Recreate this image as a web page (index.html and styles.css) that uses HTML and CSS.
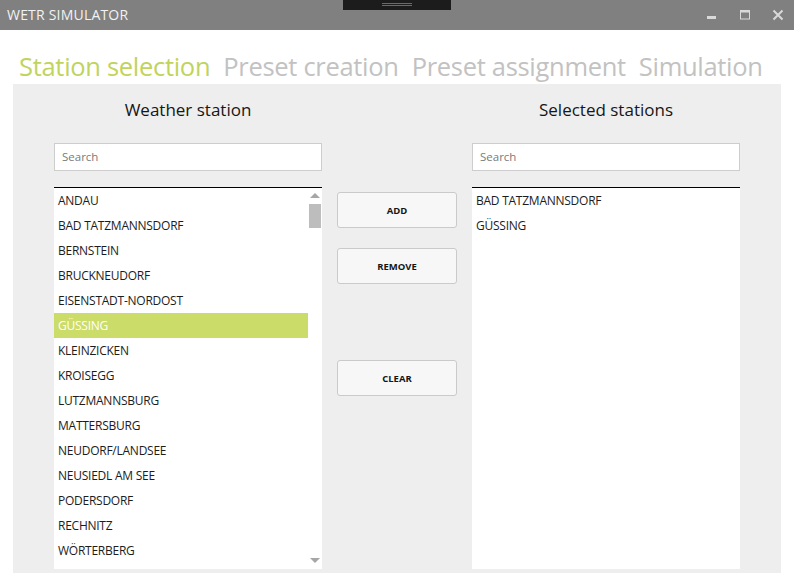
FILE: index.html
```html
<!DOCTYPE html>
<html>
<head>
<meta charset="utf-8">
<title>WETR SIMULATOR</title>
<link rel="stylesheet" href="styles.css">
</head>
<body>
<div class="window">
  <header class="titlebar">
    <div class="title">WETR SIMULATOR</div>
    <div class="handle"><span></span><span></span></div>
    <div class="controls">
      <div class="ctl"><svg width="12" height="12" viewBox="0 0 12 12"><rect x="1" y="7" width="9" height="3" fill="#d9d9d9"/></svg></div>
      <div class="ctl"><svg width="12" height="12" viewBox="0 0 12 12"><rect x="1.5" y="1.5" width="9" height="8.5" fill="none" stroke="#d9d9d9" stroke-width="1"/><rect x="1" y="1" width="10" height="2.5" fill="#d9d9d9"/></svg></div>
      <div class="ctl"><svg width="12" height="12" viewBox="0 0 12 12"><path d="M1.5 1.5 L10.5 10.5 M10.5 1.5 L1.5 10.5" stroke="#d9d9d9" stroke-width="2"/></svg></div>
    </div>
  </header>
  <nav class="tabs">
    <span class="tab active">Station selection</span>
    <span class="tab">Preset creation</span>
    <span class="tab">Preset assignment</span>
    <span class="tab">Simulation</span>
  </nav>
  <main class="panel">
    <section class="column">
      <h2 class="heading">Weather station</h2>
      <div class="search">Search</div>
      <div class="list">
        <ul class="items">
          <li>ANDAU</li>
          <li>BAD TATZMANNSDORF</li>
          <li>BERNSTEIN</li>
          <li>BRUCKNEUDORF</li>
          <li>EISENSTADT-NORDOST</li>
          <li class="selected">GÜSSING</li>
          <li>KLEINZICKEN</li>
          <li>KROISEGG</li>
          <li>LUTZMANNSBURG</li>
          <li>MATTERSBURG</li>
          <li>NEUDORF/LANDSEE</li>
          <li>NEUSIEDL AM SEE</li>
          <li>PODERSDORF</li>
          <li>RECHNITZ</li>
          <li>WÖRTERBERG</li>
        </ul>
        <div class="scrollbar">
          <div class="arrow up"></div>
          <div class="thumb"></div>
          <div class="track"></div>
          <div class="arrow down"></div>
        </div>
      </div>
    </section>
    <section class="buttons">
      <button class="btn">ADD</button>
      <button class="btn">REMOVE</button>
      <button class="btn clear">CLEAR</button>
    </section>
    <section class="column">
      <h2 class="heading">Selected stations</h2>
      <div class="search">Search</div>
      <div class="list">
        <ul class="items">
          <li>BAD TATZMANNSDORF</li>
          <li>GÜSSING</li>
        </ul>
      </div>
    </section>
  </main>
</div>
</body>
</html>
```
FILE: styles.css
```css
* { box-sizing: border-box; }
html, body { margin: 0; padding: 0; background: #ffffff; }
body {
  font-family: "Open Sans", "Noto Sans", "DejaVu Sans", sans-serif;
  width: 794px;
  height: 585px;
  overflow: hidden;
}
.titlebar {
  height: 30px;
  background: #808080;
  display: grid;
  grid-template-columns: 1fr 108px 1fr;
}
.title {
  color: #f2f2f2;
  font-size: 14px;
  line-height: 30px;
  padding-left: 7px;
  letter-spacing: 0.2px;
}
.handle {
  height: 10px;
  background: #1c1c1c;
  display: flex;
  flex-direction: column;
  align-items: center;
  padding-top: 3px;
  gap: 1px;
}
.handle span {
  display: block;
  width: 30px;
  height: 1px;
  background: #6a6a6a;
}
.controls {
  display: flex;
  justify-content: flex-end;
}
.ctl {
  width: 33px;
  height: 30px;
  display: flex;
  align-items: flex-start;
  justify-content: center;
  padding-top: 9px;
}
.ctl svg { display: block; }
.tabs {
  height: 54px;
  display: flex;
  gap: 13px;
  padding: 21px 0 0 19px;
  font-size: 25.5px;
  line-height: 30px;
  letter-spacing: -0.3px;
}
.tab { color: #c2c2c2; white-space: nowrap; }
.tab.active { color: #bfd45c; }
.panel {
  margin: 0 13px;
  height: 489px;
  background: #eeeeee;
  display: grid;
  grid-template-columns: 268px 120px 268px;
  column-gap: 15px;
  padding: 0 41px 4px;
}
.column {
  display: flex;
  flex-direction: column;
  min-height: 0;
}
.heading {
  margin: 0;
  height: 59px;
  padding-top: 15px;
  font-size: 17px;
  line-height: 22px;
  font-weight: normal;
  text-align: center;
  color: #161616;
}
.search {
  height: 28px;
  background: #ffffff;
  border: 1px solid #cdcdcd;
  font-size: 11.5px;
  color: #7a7a7a;
  line-height: 26px;
  padding-left: 7px;
  margin-bottom: 16px;
}
.list {
  flex: 1;
  background: #ffffff;
  border-top: 1px solid #000000;
  display: flex;
  min-height: 0;
  overflow: hidden;
}
.items {
  list-style: none;
  margin: 0;
  padding: 0;
  flex: 1;
}
.items li {
  height: 25px;
  line-height: 25px;
  padding-left: 4px;
  font-size: 12px;
  color: #1c1c1c;
  letter-spacing: -0.25px;
  white-space: nowrap;
}
.items li.selected {
  background: #cbdc68;
  color: #ffffff;
}
.scrollbar {
  width: 14px;
  display: flex;
  flex-direction: column;
  align-items: center;
  padding: 5px 0 6px;
}
.arrow {
  width: 0;
  height: 0;
  border-left: 5px solid transparent;
  border-right: 5px solid transparent;
}
.arrow.up { border-bottom: 5px solid #a6a6a6; }
.arrow.down { border-top: 5px solid #a6a6a6; }
.thumb {
  width: 12px;
  height: 24px;
  background: #bdbdbd;
  margin-top: 6px;
}
.track { flex: 1; }
.buttons {
  display: flex;
  flex-direction: column;
  padding-top: 108px;
  gap: 20px;
}
.btn {
  width: 120px;
  height: 36px;
  border: 1px solid #cacaca;
  border-radius: 3px;
  background: #f7f7f7;
  font-family: "Open Sans", "Noto Sans", sans-serif;
  font-weight: bold;
  font-size: 9.5px;
  color: #151515;
  padding: 0;
}
.btn.clear { margin-top: 56px; }
```
